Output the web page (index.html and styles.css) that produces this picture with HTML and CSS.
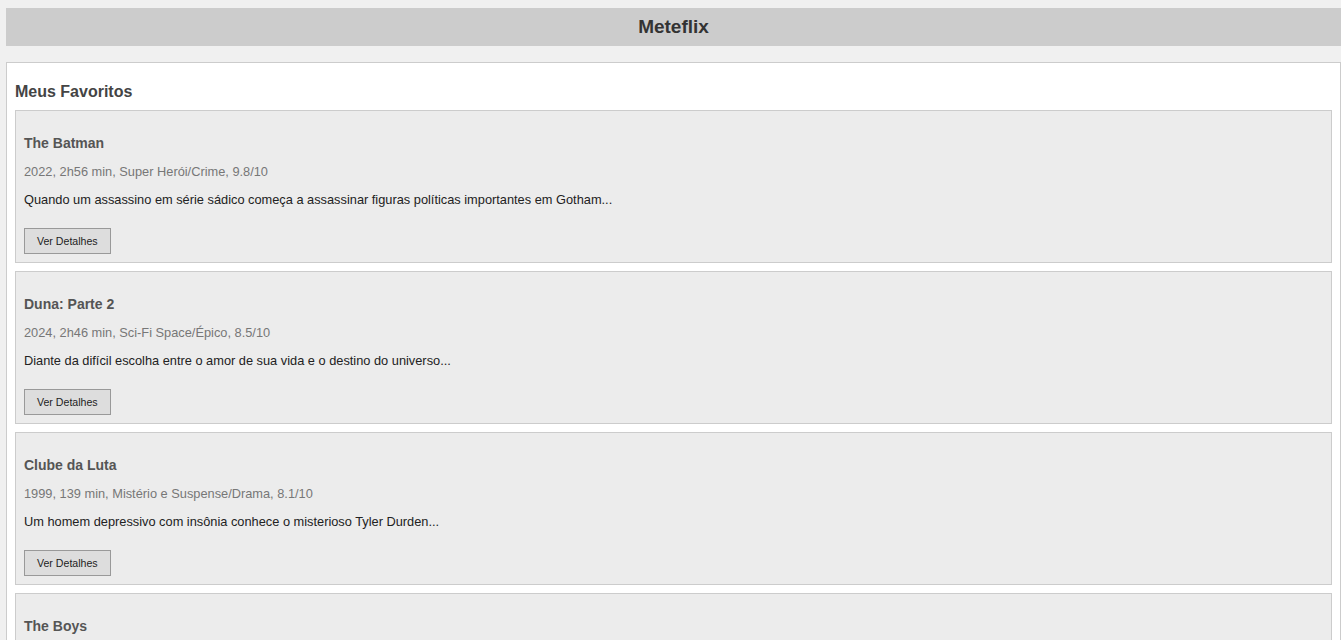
FILE: index.html
```html
<!DOCTYPE html>
<html lang="pt-BR">
<head>
<meta charset="utf-8">
<title>Meteflix</title>
<link rel="stylesheet" href="styles.css">
</head>
<body>
<header class="topbar"><h1 class="brand">Meteflix</h1></header>
<main class="panel">
  <h2 class="panel-title">Meus Favoritos</h2>
  <div class="list">
    <article class="card">
      <h3 class="card-title">The Batman</h3>
      <p class="card-meta">2022, 2h56 min, Super Herói/Crime, 9.8/10</p>
      <p class="card-desc">Quando um assassino em série sádico começa a assassinar figuras políticas importantes em Gotham...</p>
      <button class="btn">Ver Detalhes</button>
    </article>
    <article class="card">
      <h3 class="card-title">Duna: Parte 2</h3>
      <p class="card-meta">2024, 2h46 min, Sci-Fi Space/Épico, 8.5/10</p>
      <p class="card-desc">Diante da difícil escolha entre o amor de sua vida e o destino do universo...</p>
      <button class="btn">Ver Detalhes</button>
    </article>
    <article class="card">
      <h3 class="card-title">Clube da Luta</h3>
      <p class="card-meta">1999, 139 min, Mistério e Suspense/Drama, 8.1/10</p>
      <p class="card-desc">Um homem depressivo com insônia conhece o misterioso Tyler Durden...</p>
      <button class="btn">Ver Detalhes</button>
    </article>
    <article class="card">
      <h3 class="card-title">The Boys</h3>
      <p class="card-meta">2019, 4 temporadas, Super Herói/Ação, 8.7/10</p>
      <p class="card-desc">Um grupo de vigilantes decide enfrentar super-heróis corruptos...</p>
      <button class="btn">Ver Detalhes</button>
    </article>
  </div>
</main>
</body>
</html>
```
FILE: styles.css
```css
html, body {
  background: #f0f0f0;
}
body {
  margin: 8px 0 0 6px;
  font-family: "Liberation Sans", Arial, sans-serif;
  color: #222;
}
.topbar {
  background: #cccccc;
  height: 38px;
  display: flex;
  align-items: center;
  justify-content: center;
}
.brand {
  margin: 0;
  font-size: 19px;
  font-weight: bold;
  color: #333;
  line-height: 22px;
}
.panel {
  display: block;
  margin-top: 16px;
  background: #fff;
  border: 1px solid #cccccc;
  padding: 8px;
}
.panel-title {
  margin: 12px 0 9px;
  font-size: 16px;
  line-height: 18px;
  font-weight: bold;
  color: #444;
}
.list {
  display: flex;
  flex-direction: column;
  gap: 8px;
}
.card {
  background: #ececec;
  border: 1px solid #cccccc;
  padding: 8px;
  display: flex;
  flex-direction: column;
  align-items: flex-start;
}
.card-title {
  margin: 16px 0 13px;
  font-size: 14px;
  line-height: 16px;
  font-weight: bold;
  color: #555;
}
.card-meta {
  margin: 0 0 13px;
  font-size: 12.8px;
  line-height: 15px;
  color: #777;
}
.card-desc {
  margin: 0 0 21px;
  font-size: 12.8px;
  line-height: 15px;
  color: #222;
}
.btn {
  font-family: "Liberation Sans", Arial, sans-serif;
  font-size: 10.6px;
  height: 26px;
  padding: 0 12px;
  background: #dddddd;
  border: 1px solid #999;
  color: #222;
  border-radius: 0;
}
```
